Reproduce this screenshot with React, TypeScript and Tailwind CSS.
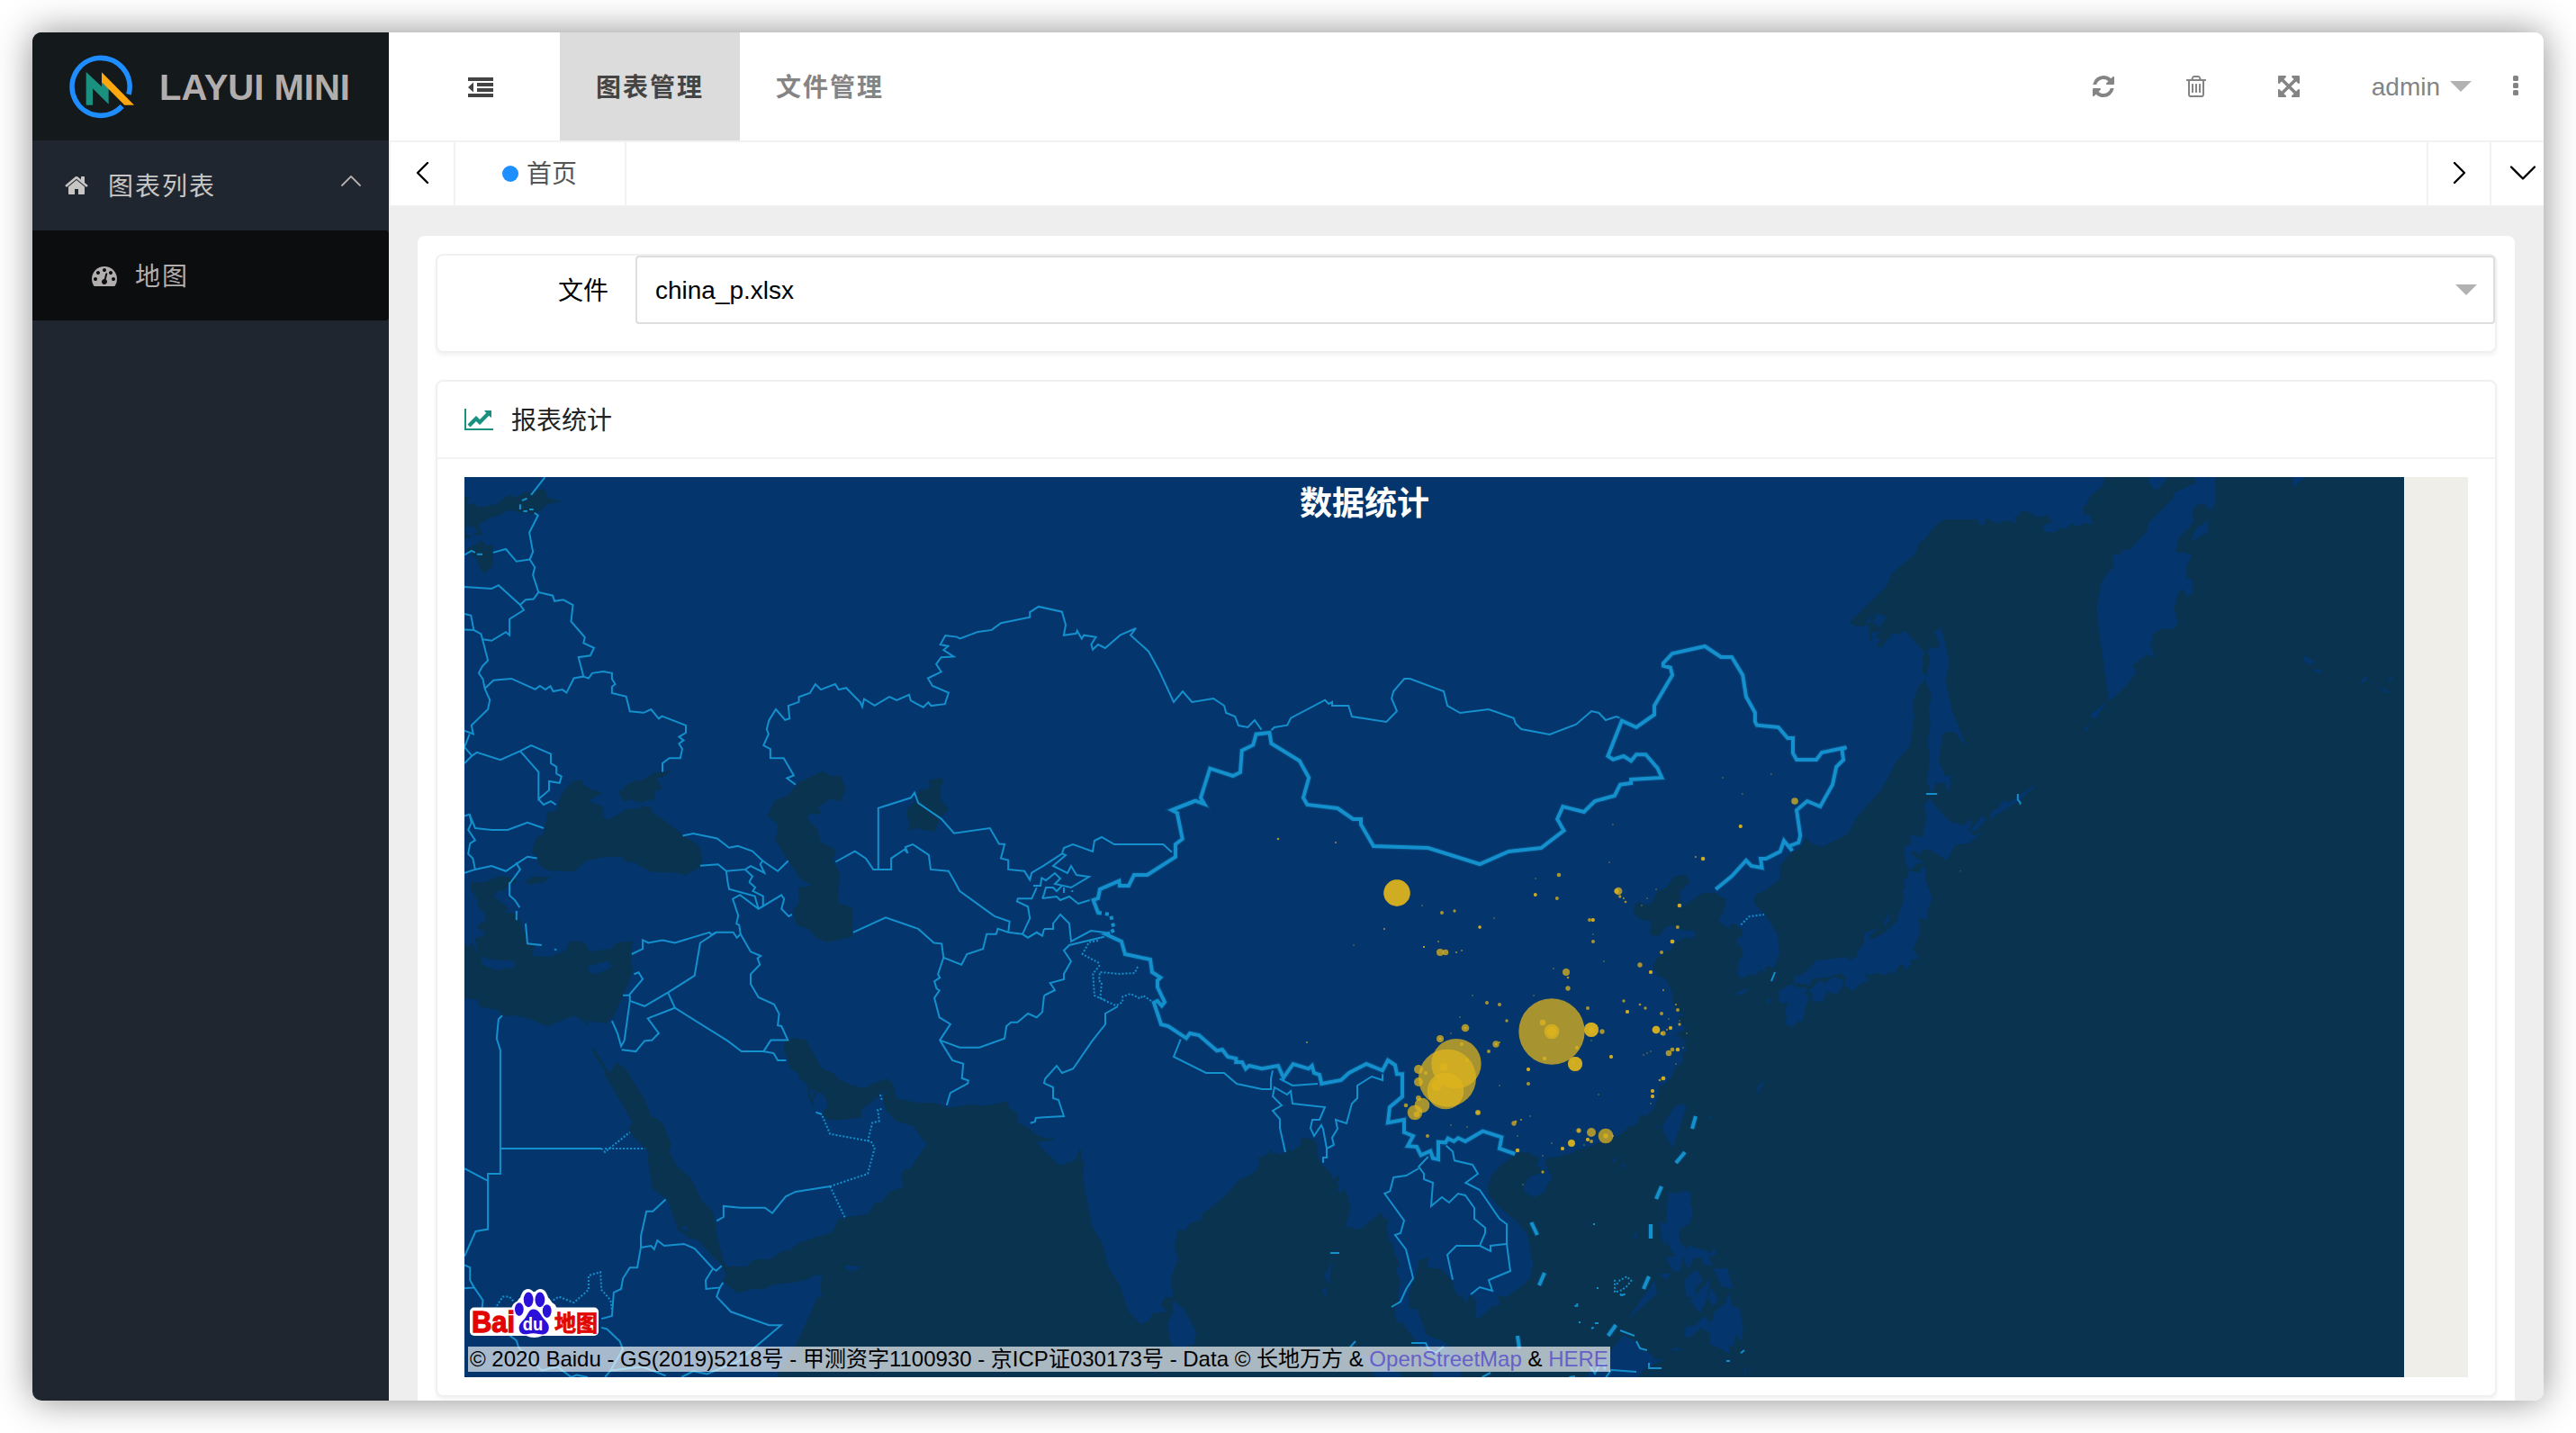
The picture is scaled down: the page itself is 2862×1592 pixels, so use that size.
import React from "react";

const SANS = "font-['Liberation_Sans','Noto_Sans_CJK_SC',sans-serif]";

/* ---------- map data ---------- */

// Each survey sheet has its own origin and scale; points are kept in sheet units.
type Sheet = [number, number, number, number];
const SHEETS: Record<string, Sheet> = {
  NW: [460, 390, 1.96, 2.61333],
  W: [510, 980, 1.96, 2.5621],
  AL: [1200, 520, 2.9037, 3],
  NE: [1640, 640, 2.9037, 3],
  TI: [1160, 900, 3, 3],
  SE: [1500, 1040, 3, 3],
  E: [2040, 500, 1.9075, 2.529],
  IN: [1160, 1180, 3, 3],
  JP: [1800, 900, 3, 3],
};

function project(src: string): string {
  let sheet: Sheet = SHEETS.NW;
  const out: string[] = [];
  for (const tok of src.trim().split(/\s+/)) {
    if (SHEETS[tok]) {
      sheet = SHEETS[tok];
      continue;
    }
    const [x, y] = tok.split(",").map(Number);
    out.push(`${(sheet[0] + x / sheet[2]).toFixed(1)},${(sheet[1] + y / sheet[3]).toFixed(1)}`);
  }
  return out.join(" ");
}

const SEAS: string[] = [
  // Pacific
  `E 1210,60 568,60 568,76 565,100 538,130 529,155 523,160 525,180 538,184 544,210 528,205 512,215 500,206 484,224 475,216 464,230 442,230 438,210 459,204 445,180 432,190 396,169 389,182 378,188 383,207 362,196 343,206 318,192 314,210 305,210 299,195 233,195 212,208 190,248 174,264 168,292 118,346 106,384 28,484 44,497 69,491 71,535 76,536 75,514 95,508 84,525 94,533 85,553 97,554 118,514 108,556 120,514 135,517 146,507 189,571 181,588 185,595 182,622 190,632 189,644 175,664 162,712 166,750 161,760 163,772 156,834
   NE 1358,614 1308,712 1230,800 1198,860 1116,902 1078,890 1066,872 1040,912 1020,918 980,964
   JP 532,230 487,265 447,284 447,311 482,347 525,415 532,479 512,525 486,519 483,540 466,528 463,541 446,552 440,545 402,562 384,532 397,535 393,503 411,485 401,450 386,446 391,425 404,422 409,403 383,378 368,380 362,395 326,367 345,340 355,293 335,290 318,275 276,276 192,333 212,306 195,298 203,290 197,275 232,239 218,215 180,222 155,257 120,275 110,305 82,318 62,306 50,314 42,340 55,355 82,370 98,365 105,380 97,408 110,419 133,418 150,392 168,384 192,388 205,400 250,403 248,424 230,432 228,421 185,440 168,466 150,470 122,495 108,525 118,534 125,552 150,560 175,610 175,640 188,655 182,665 215,684 190,690 196,705 222,727 176,752 195,750 210,768 228,769 208,780 222,788 220,803 207,808 210,840 187,858 170,892 140,922 128,912 133,935 124,960
   SE 1020,560 1010,578 985,600 965,595 960,622 940,638 935,628 898,665 875,672 830,690 780,708 750,716 735,725 690,735 655,740 648,755 660,775 645,780 620,765 632,742 618,730 626,722 610,735 600,722 570,720 550,728 500,765 470,800 458,840 466,868 505,910 555,950 590,992 610,1095 600,1140 575,1165 520,1203 490,1198 503,1228 475,1234 430,1275 418,1273 420,1215 400,1195 385,1225 378,1208 375,1192 365,1205 345,1175 342,1148 300,1108 255,1105 262,1070 230,1080 222,1120 195,1190 195,1240 225,1245 255,1330 310,1350 370,1400 369,1490 E 1210,2640`,
  // Indian Ocean, Red Sea and Persian Gulf
  `W 690,1409 735,1315 780,1182 795,1180 787,1168 790,1118 770,1120 762,1130 735,1138 685,1146 660,1160 640,1157 608,1170 590,1155 573,1130 582,1124 572,1088 548,1060 522,1020 500,1012 484,995 478,995 455,905 421,872 411,790 413,770 370,710 373,690 380,688 316,545 318,535 293,490 290,465 325,540 330,541 343,513 362,530 405,620 418,668 430,672 445,690 462,745 458,770 475,810 504,840 530,910 545,925 555,945 562,1010 580,1093 625,1095 640,1075 680,1073 703,1050 720,1048 740,1027 814,996 826,960 840,954 892,944 905,913 922,910 938,880 967,868 963,830 972,815 980,818 1019,745 1005,725 990,695 952,680 930,650 922,615 932,590 877,648 876,670 830,677 800,675 790,660 802,640 800,615 788,598 778,600 770,625 775,650 760,610 758,575 740,557 738,543 724,535 707,475 709,450 730,444 755,448 790,530 818,545 825,560 860,580 885,587 905,570 935,560 945,575 952,617 1000,628 1035,628 1065,643 1115,632 1145,637 1195,624 1198,645 1215,655 1217,685 1240,700 1257,720 1280,730 1298,725 1290,735 1258,741
   IN 0,293 52,345 105,326 118,290 125,292 122,315 134,340 129,385 137,430 160,548 195,605 213,680 255,748 280,830 323,874 350,860 362,838 410,830 388,808 402,784 430,783 423,720 447,655 435,615 447,558 470,560 485,538 526,525 526,506 600,450 652,390 685,378 710,358 718,340 712,320 745,307 755,288 760,310 772,300 780,310 805,300 815,290 828,298 838,288 855,275 860,248 878,256 895,256 910,272 910,308 920,335 955,370 965,392 980,375 985,392 975,398 985,415 975,420 987,436 1002,420 1022,488 1003,555 1020,548 1045,557 1062,553 1080,533 1112,512 1115,497 1140,525 1148,520 1144,560 1150,598 1162,602 1168,640 1178,655 1186,680 1173,685 1178,712 1188,722 1180,770 1180,800 1168,825 1173,866 1192,867 1235,925 1275,985 1300,1050 1300,1070 -100,1070`,
  // Mediterranean and Aegean
  `W 28,0 100,0 90,20 75,40 95,60 110,75 100,84 128,92 135,120 145,150 148,180 165,172 160,210 200,213 232,195 240,170 258,167 275,175 285,197 330,190 345,172 378,168 375,220 378,255 357,325 335,385 322,402 290,398 280,392 280,408 270,394 250,380 192,411 160,392 125,380 92,382 90,366 45,355 40,335 10,330 10,175 20,185 28,170 40,210 35,160 60,148 38,128 60,105 55,88 35,60 45,60 26,20`,
  `NW 155,1540 185,1525 215,1528 225,1540 205,1550 195,1568 180,1560 175,1550`,
  `NW 245,1535 260,1525 298,1528 280,1545 268,1543 258,1550 243,1546`,
  `NW 128,1550 140,1568 122,1566`,
  // Black Sea, Azov
  `NW 290,1340 310,1335 320,1290 330,1270 345,1250 365,1245 370,1260 390,1275 412,1282 380,1307 412,1322 412,1350 422,1362 465,1328 492,1328 495,1320 515,1325 520,1340 555,1372 585,1405 620,1435 628,1470 625,1498 590,1522 575,1515 515,1512 475,1482 465,1487 452,1468 410,1470 375,1480 348,1512 290,1508 270,1490 268,1472 257,1452 265,1415 283,1400`,
  `NW 442,1280 455,1275 460,1262 480,1248 500,1245 520,1225 562,1218 540,1238 528,1240 540,1270 525,1280 525,1300 490,1312 470,1302 455,1308 450,1290`,
  // Caspian, Aral
  `NW 770,1350 785,1305 815,1290 835,1255 890,1220 912,1235 928,1232 940,1270 930,1308 905,1300 880,1325 888,1343 858,1345 858,1360 880,1390 885,1425 918,1448 912,1480 927,1515 925,1568 W 825,60 835,62 857,75 857,155 803,171 780,160 762,133 735,122 727,80 740,60 738,15 NW 865,1552 840,1530 815,1480 787,1420 792,1375`,
  `NW 1075,1355 1073,1330 1090,1310 1100,1275 1125,1268 1120,1245 1145,1240 1155,1245 1145,1270 1150,1310 1165,1330 1145,1355 1135,1395 1110,1390 1095,1385 1075,1392 1080,1370`,
  // Baltic
  `NW 110,420 120,425 115,445 135,442 135,455 180,445 205,418 220,425 245,410 265,405 285,400 290,425 322,437 290,445 265,475 240,470 205,462 190,475 165,485 140,505 150,535 130,535 110,545`,
  `NW 148,548 155,565 172,562 172,625 155,645 145,635 135,600 112,575 130,565`,
];

const LANDS: string[] = [
  `NW 110,512 128,508 138,525 122,540 112,525`,
  `E 757,70 803,70 803,148 795,170 780,152 768,152 757,165 755,185 758,200 745,222 727,245 720,283 728,292 735,285 754,297 742,325 742,360 753,362 757,400 745,413 735,390 725,400 716,445 724,485 715,503 687,503 672,518 667,545 675,587 660,573 628,606 636,625 615,662 578,708 551,447 563,368 588,325 586,292 600,294 607,281 622,280 659,228 662,205 715,135 715,120 763,92`,
  `E 661,88 668,70 706,70 688,104 675,114`,
  `E 788,198 788,230 752,258 762,222`,
  `E 969,70 995,76 969,103`,
  `E 576,703 550,755 540,752 541,738 552,730`,
  `E 538,766 530,793 524,785`,
  `E 993,578 1016,596 1003,604 990,592`,
  `E 1008,616 1030,616 1024,630`,
  `E 1122,633 1127,645 1108,660`,
  `E 1170,640 1185,640 1170,652`,
  `E 1147,660 1178,682 1165,682`,
  `E 62,485 80,458 70,485`,
  `E 86,458 106,468 92,502 86,486 76,490`,
  `E 222,495 238,582 238,612 232,644 245,728 278,838 252,792 232,792 226,800 217,874 232,918 242,910 242,940 237,962 232,935 216,937 212,932 204,966 201,966 193,932 199,858 193,820 200,774 196,722 203,692 189,648 199,590 194,563 208,552 214,560 219,545 208,510 217,505`,
  `E 198,978 215,1008 240,1042 268,1055 290,1036 281,1068 291,1083 312,1073 280,1105 253,1109 234,1152 195,1120 182,1125 176,1136 165,1126 157,1132 186,1161 168,1162 162,1177 151,1176 143,1117 160,1104 156,1080 183,1088 192,1025 186,998`,
  `E 428,937 388,985 325,1037 330,1015 343,1008 355,982 365,992 382,975 412,948`,
  `E 320,1037 295,1070 284,1070 308,1028`,
  `JP 1017,190 1017,230 1041,294 1023,340 1023,364 997,362 999,412 977,462 995,494 968,500 970,517 947,532 949,514 926,520 914,552 903,525 905,538 883,550 855,542 827,552 820,538 818,552 832,567 800,580 775,603 748,583 746,570 754,560 738,544 700,555 640,562 632,586 617,578 579,578 580,547 595,555 628,531 652,502 757,489 765,500 788,490 790,472 813,443 813,411 862,393 830,420 835,432 880,410 922,370 948,290 940,272 950,262 945,232 958,225 963,200 990,208 1000,210 1005,190`,
  `JP 897,345 897,368 880,392 880,372`,
  `JP 665,567 682,577 714,555 742,568 740,590 720,616 692,604 675,639 640,637 640,607 620,612`,
  `JP 570,580 592,592 618,592 622,603 612,610 633,624 620,648 608,705 595,703 570,724 548,710 556,690 549,665 562,640 535,645 525,625 535,620 525,605`,
  `JP 530,533 515,578 520,550`,
  `JP 375,614 405,600 433,592 410,615`,
  `JP 489,625 508,635 490,647`,
  `JP 488,898 450,955 460,918`,
  `SE 1105,558 1122,568 1075,707 1043,650 1045,625 1080,570`,
  `SE 1060,852 1085,858 1120,848 1137,855 1134,890 1143,920 1130,960 1100,975 1095,1000 1100,1020 1125,1045 1130,1028 1155,1040 1180,1045 1205,1060 1210,1035 1222,1060 1195,1070 1208,1100 1180,1095 1170,1070 1145,1072 1130,1110 1115,1090 1110,1065 1100,1120 1075,1115 1052,1070 1085,1066 1065,1040 1056,1010 1050,1035 1040,1010 1030,950 1053,960`,
  `SE 1210,1107 1257,1107 1277,1175 1240,1170`,
  `SE 1155,1110 1178,1150 1155,1165 1150,1200 1120,1205 1115,1150 1130,1130`,
  `SE 1204,1142 1190,1200 1168,1258 1132,1215`,
  `SE 1205,1170 1227,1212 1210,1235 1195,1205 1172,1245`,
  `SE 1025,1125 1070,1125 1055,1145`,
  `SE 1262,1187 1275,1235 1300,1240 1310,1310 1305,1350 1285,1330 1280,1362 1262,1370 1265,1395 1235,1375 1200,1360 1200,1325 1170,1305 1130,1340 1112,1330 1120,1300 1150,1298 1180,1265 1205,1290 1215,1250 1250,1225`,
  `SE 1015,1150 1023,1192 922,1280`,
  `SE 910,1330 945,1345 970,1375 1010,1398 1010,1410 1050,1408 985,1440 950,1480 780,1480 810,1430 870,1380`,
  `SE 1065,1380 1090,1370 1110,1382`,
  `SE 1315,1437 1325,1437 1313,1470`,
  `SE 600,800 640,790 658,775 675,808 658,825 645,855 615,870 582,855 577,830`,
  `SE 870,745 880,738 887,746 878,752`,
  `SE 898,768 918,756 916,772`,
  `SE 1190,593 1208,606 1194,610`,
  `SE 1015,636 1022,630 1035,640`,
  `SE 942,1006 950,985 960,1006`,
  `SE 30,1395 80,1400 130,1430 170,1460 180,1480 90,1480 50,1420`,
  `IN 430,792 465,822 507,900 500,940 465,950 425,945 411,875 430,830`,
  `IN 962,648 955,700 951,740 932,712 948,690`,
  `IN 940,750 926,762 940,787`,
  `IN 1390,1000 1300,1000 1280,960 1390,1060`,
  `W 280,238 325,225 333,238 325,248 295,263 284,255`,
  `W 48,208 60,218 85,222 122,225 122,242 80,250 50,235`,
  `W 843,1090 880,1095 855,1109 840,1100`,
  `W 763,590 775,592 768,622`,
  `W 484,990 490,975 502,992`,
];

const BORDERS: string[] = [
  `NW 285,366 255,418`,
  `NW 262,470 270,477 251,527 259,583 252,605 263,628 259,650 271,700 302,710 306,726 325,722 346,737 342,785 372,831 369,848 392,862 384,884 358,889 369,945 348,950 332,992 323,983 303,988 297,973 286,983 274,972 264,982 212,951 173,956 154,980`,
  `NW 172,585 200,575 223,611 252,605`,
  `NW 110,592 125,580 133,585`,
  `NW 137,590 149,590`,
  `NW 246,428 235,434`,
  `NW 231,445 231,460`,
  `NW 238,465 247,465`,
  `NW 251,460 260,460`,
  `NW 110,685 169,690 184,680 231,737 239,752 208,778 208,825 200,816 169,841 149,837`,
  `NW 231,737 243,722 260,720 271,700`,
  `NW 110,763 124,768 130,810 110,809`,
  `NW 130,810 146,822 161,898 149,915 141,935 150,952 154,980 165,1013 161,1040 125,1087 129,1112 110,1102`,
  `NW 369,945 380,950 388,935 412,930 431,935 431,952 438,967 431,975 431,993 462,1003 470,1046 500,1050 516,1040 533,1067 540,1060 592,1087 592,1108 577,1120 587,1130 577,1140 584,1155 580,1182 556,1182 541,1197 541,1222`,
  `NW 121,1112 110,1150 126,1175 110,1197`,
  `NW 126,1175 137,1165 188,1187 231,1161 255,1145 298,1170 298,1197 310,1207 310,1227 321,1235 317,1254 294,1249 294,1275 271,1301 271,1222 231,1161`,
  `NW 271,1301 282,1317 298,1307 309,1317`,
  `NW 110,1350 121,1345 133,1385 169,1390 204,1390 247,1369 282,1385`,
  `NW 121,1345 125,1370 118,1390 133,1420 122,1430 118,1460 128,1473 133,1505`,
  `NW 110,1515 133,1505 169,1495 200,1510 222,1490 247,1468 268,1473`,
  `NW 222,1485 231,1505 208,1547 208,1568`,
  `NW 585,1407 608,1401 660,1415 686,1442 705,1437 737,1452 759,1480 792,1510 815,1480`,
  `NW 623,1494 662,1490 680,1510 721,1505 733,1495 763,1515 754,1490 759,1480`,
  `NW 680,1510 683,1542`,
  `NW 721,1505 737,1525 730,1542`,
  `NW 831,1259 812,1240 827,1232 805,1182 776,1182 776,1155 761,1145 772,1112 768,1098 773,1072 788,1040 808,1071 818,1067 815,1030 838,1019 838,1004 862,993 874,967 886,983 917,967 925,983 941,978 972,1020 976,1033 980,1010 1003,1029 1035,1004 1051,1014 1078,998 1082,1015 1109,1034 1120,1020 1126,1030 1156,1025 1164,992 1129,972 1119,950 1148,931 1137,909 1148,889 1175,887 1153,868 1163,857 1146,852 1157,826 1182,830 1189,835 1228,815 1258,810 1278,790 1341,773 1341,758 1360,742 1411,757 1419,795 1415,825 1442,820 1444,812 1454,835 AL 12,557 51,563 36,588 41,605 58,588 81,600 129,557 180,534 163,557 221,611 255,675 302,780 331,744 361,780 430,768 465,792 471,816 500,828 511,858 541,864 563,840 585,872`,
  `AL 617,874 627,864 668,857 680,833 790,773 802,786 813,780 813,792 866,792 877,828 988,846 1022,810 1005,768 1011,744 1046,702 1064,702 1173,744 1185,792 1226,816 1318,804 1399,833 1405,852 1423,870 1515,888 NE 323,494 372,450 396,456 418,480 452,468 463,473`,
  `NW 1011,1505 1011,1327 1082,1297 1090,1282 1098,1312 1148,1358 1176,1400 1254,1385 1274,1431 1286,1432 1278,1473 1294,1478 1294,1505 1329,1510 1341,1535 1345,1515 TI 0,184 60,145 66,126 96,114 162,138 168,102 192,90 234,114 397,114 426,140`,
  `NW 918,1483 960,1452 984,1473 1000,1505 1039,1505 1039,1473 1068,1447 1075,1458 1070,1440 1086,1432 1121,1463 1125,1505 1164,1510 1178,1542 W 1090,25 1166,97 1199,112 1196,143`,
  `TI 60,145 72,150 30,186 78,210 90,186 108,216 150,222 90,258 36,246 54,228 36,210 6,234 -8,226 -12,252 -36,252`,
  `TI -6,294 0,280 6,258 30,258 42,270 60,252`,
  `TI 66,258 66,276`,
  `TI 91,270 97,270`,
  `TI -6,294 42,288 54,300 84,288 114,312 152,300`,
  `TI 0,396 30,396 30,378 54,348 84,378 90,438 156,402 206,408`,
  `TI 200,422 84,450 66,468 90,504 66,546 66,564 20,576 36,600 0,618`,
  `TI 246,654 204,678 204,714 160,770 97,862 60,876 42,852 4,895 0,910 30,924 30,960 48,966 66,1020 0,1024 W 1256,671 1254,682 1244,686`,
  `TI 455,764 432,822 540,876 600,876 642,912 726,930 756,930 756,895 762,868`,
  `TI 785,895 828,918 912,912`,
  `TI 804,1140 786,1060 786,1030 762,1002 792,984 762,954 768,924 810,948 822,936 828,978 936,990 918,1032 894,1032 888,1060 900,1086 924,1050 930,1062 942,1128 942,1158 930,1158 930,1175`,
  `TI 942,1128 966,1116 960,1092 978,1062 972,1032 1008,1044 1026,978 1044,960 1044,918 1092,888 1128,900 1128,880`,
  `SE 260,735 229,768 246,792 246,810 276,822 270,900 306,870 330,888 360,858 384,864 414,906 414,942 450,972 450,990 432,1032 468,1050 468,1032 520,1026`,
  `SE 229,774 187,798 145,804 133,850 115,858 180,948 168,990 150,996 186,1044 210,1140 187,1176 168,1218 138,1236`,
  `SE 320,698 342,718 348,748 408,762 426,792 385,822 432,846 498,942 522,960 522,1026 534,1116 462,1146 474,1182 432,1170 402,1194`,
  `SE 432,1032 354,1032 324,1062 342,1145`,
  `SE 204,1356 252,1356 262,1378 285,1388 312,1368`,
  `SE 900,1314 948,1332`,
  `SE 954,1350 966,1374 990,1380`,
  `SE 996,1422 996,1440 1038,1440`,
  `SE 1302,1390 1314,1380`,
  `SE 1254,1416 1266,1416`,
  `SE 1416,120 1404,150`,
  `SE 853,1470 870,1446 954,1452`,
  `SE 800,1435 816,1458 830,1430 848,1428 848,1445`,
  `SE 440,1470 468,1455`,
  `SE 730,1470 750,1467`,
  `SE 0,1370 18,1350`,
  `SE 748,1232 757,1232 757,1224`,
  `SE 810,960 816,960`,
  `SE 822,1173 828,1173`,
  `SE 816,1290 828,1290`,
  `SE 804,1307 812,1304`,
  `SE 762,1287 768,1287`,
  `SE 900,1192 904,1197 917,1193`,
  `IN 954,636 984,636`,
  `E 191,966 214,966`,
  `E 385,966 385,982 390,990 390,996`,
  `W 110,0 110,38 122,52 132,72`,
  `W 125,82 125,108`,
  `W 145,118 149,175 180,179`,
  `W 208,190 212,194`,
  `W 376,205 400,190 400,165 412,173 443,165 470,173 545,143 550,150`,
  `W 560,143 525,173 513,266 455,314 404,353 372,338`,
  `W 550,150 560,143 597,143 605,158 613,148 635,198 657,210 650,217 655,235 635,262 635,290 652,328 686,348 697,375 694,408 702,410 716,450 679,450 663,482 685,487 694,507 712,507`,
  `W 663,482 615,482 585,452 470,358 411,388 435,430 420,450 404,452 385,482 354,477`,
  `W 470,358 455,314`,
  `W 381,262 391,257 400,276 370,322 357,322`,
  `W 372,322 372,338 360,450 353,467 345,430 333,395`,
  `W 613,148 610,122 604,118 608,95 596,48 612,36 652,76 702,37 708,48 702,76 718,97 725,92`,
  `W 585,0 588,20 644,40 652,76`,
  `W 632,0 645,15 640,25 662,40 662,70`,
  `W 858,143 929,101 1000,133 1034,173 1051,175 1055,215 1043,262 1047,272 1035,282 1040,303 1046,308 1035,330 1046,385 1070,404 1047,450 1074,507 1098,517 1095,558 1109,565 1108,573 1070,600 1062,635`,
  `W 1047,450 1090,471 1133,471 1188,445 1192,410 1202,399 1216,399 1239,374 1258,385 1270,370 1274,323`,
  `W 1055,215 1094,235 1106,205 1141,190 1149,148 1170,148 1173,133 1196,143 1227,148 1239,158 1258,143 1270,153 1274,133`,
  `W 1227,148 1243,103 1239,70 1215,55 1217,47 1247,47 1258,16`,
  `W 94,380 86,390 82,445 90,478 90,830 63,830 63,988 36,994 12,1065`,
  `W 12,815 63,850`,
  `W 90,758 310,758`,
  `W 450,903 422,937 408,937 396,1008 396,1040 388,1097 372,1097 357,1128 353,1158 337,1168 333,1235 310,1243`,
  `W 396,1040 418,1035 425,1045 432,1020 447,1035 490,1030 513,1043 553,1100 560,1106 572,1092`,
  `W 553,1100 537,1133 538,1158 568,1154 575,1140`,
  `W 568,1154 561,1180 592,1223 675,1261 701,1261 607,1365 540,1400 510,1392 485,1409`,
  `W 310,1268 322,1272 350,1307 357,1330 330,1390 318,1409`,
  `W 12,1090 24,1097 24,1133 33,1154 12,1156`,
  `W 33,1154 52,1190 50,1215`,
  `W 110,1290 125,1305 130,1325 180,1390 215,1380 244,1409 256,1403 280,1409`,
  `W 330,1390 400,1380 450,1405`,
  `W 561,964 576,953 576,922 613,927 666,927 682,942 711,895 733,881 808,866`,
  `W 777,655 790,661`,
];

const DOTTED: string[] = [
  `TI 180,435 150,440 128,480 180,508 184,520 163,545 168,618 240,652 262,640 262,622 288,612 320,628 330,618 366,642`,
  `TI 312,522 302,543 252,546 186,540 183,568 192,575 187,625 200,632`,
  `JP 403,382 430,355 480,348`,
  `W 310,758 318,768 372,712`,
  `W 318,758 405,758`,
  `W 808,866 840,954`,
  `W 808,866 890,830 905,757 897,738 808,717 790,662`,
  `W 890,738 900,685 915,680 912,648 922,645`,
  `W 917,605 922,625`,
  `W 78,1215 95,1180 110,1180 120,1195`,
  `W 205,1190 218,1180 250,1197 282,1160 282,1120 308,1110 310,1160 330,1190 333,1220`,
  `SE 882,1145 882,1187 905,1180 925,1165 937,1148 922,1135 898,1148 886,1165`,
];

const FRONTIER: string[] = [
  `AL 372,1109 296,1140 314,1150 TI 444,12 461,96 438,114 438,156 344,216 300,216 282,252 252,252 250,236 186,264 180,294 164,300 180,342 188,343`,
  `TI 220,410 206,414 258,438 270,480 354,498 360,540 388,558 378,568 378,590 402,640 392,652 378,636 366,642 390,714 414,720 474,760 486,744 516,750 576,802 594,798 612,822 640,828 640,840 660,840 672,862 684,852 726,862 780,852 798,892 830,846 882,862 893,852 900,876 918,882 925,912 990,900 1016,876 1074,846 1128,868 1146,834 1170,850 1176,880 1194,880 1194,955 1152,990 1146,1042 1200,1032 1200,1074 1230,1086 1212,1120 1242,1122 1256,1150 1288,1136 1296,1160 1314,1164 1314,1106 1338,1108 1346,1094 1366,1104 1380,1093 1404,1104 1462,1070 SE 505,670 498,708 550,726`,
  `AL 296,1140 372,1109 401,1120 389,1099 419,1001 493,1026 517,1014 522,941 558,923 568,887 611,882 617,918 708,976 738,1032 720,1099 733,1122 831,1134 TI 1030,30 1056,30 1056,48 1098,120 1280,126 1452,180 NE 105,918 210,906 283,848 262,810 280,768 348,786 383,750 447,732 465,695 500,690 500,678 599,672 585,640 547,595 517,595 500,616 476,600 442,611 425,600 470,482 517,504 575,462 575,432 633,330 627,305 604,299 604,290 633,258 738,234 790,270 825,270 860,330 871,402 900,455 900,485 906,497 975,504 1005,540 1022,540 1022,590 1034,612 1098,612 1115,588 1195,571 1180,578 1185,612 1162,636 1150,695 1110,768 1068,750 1034,780 1046,865 1040,888 1010,900 1020,916 993,882 981,918 935,942 918,942 922,972 888,966 871,948 825,1000 773,1044`,
  `SE 604,954 624,996`,
  `SE 1152,600 1140,642`,
  `SE 1116,720 1086,756`,
  `SE 1038,834 1020,876`,
  `SE 1002,960 1002,1008`,
  `SE 648,1122 630,1164`,
  `SE 996,1134 978,1176`,
  `SE 886,1296 860,1332`,
  `SE 558,1332 564,1374`,
];

// x,y,r triples in sheet units.
const BUBBLES: string[] = [
  `SE 672,318,110 672,318,25 672,318,16 642,288,10 756,372,6 648,408,7 804,312,24 804,312,24 804,312,10 750,426,24 750,426,24 744,420,5 354,425,83 324,473,96 318,516,61 312,437,14 288,498,18 390,414,6 372,360,6 252,456,6 240,564,25 216,588,25 222,594,10 228,444,15 228,486,15 228,540,9 186,564,7 384,306,13 384,306,4 300,342,12 300,342,4 486,360,11 486,360,4 462,384,6 498,354,3 522,282,5 456,222,6 498,228,6 300,54,12 318,54,10 246,36,3 354,54,3 720,120,12 726,138,4 726,174,8 792,240,6 840,318,8 870,402,6 870,402,6 594,444,6 594,444,6 594,492,6 426,588,9 426,588,6 258,666,6 546,624,8 552,618,4 570,612,3 762,648,8 762,648,5 804,654,15 852,666,25 852,666,8 876,666,3 738,690,12 738,690,11 792,678,6 792,678,6 804,684,6 708,708,6 708,708,6 558,714,7 558,714,6 642,786,5 810,18,6 966,96,8 1002,120,6 1002,120,6 1074,18,7 1074,18,7 1038,54,6 912,216,5 924,252,6 924,252,6 966,228,4 984,240,5 1038,258,6 1092,246,6 1086,228,3 1020,312,13 1020,312,13 1044,324,8 1038,324,5 1068,306,6 1068,306,6 1056,312,3 1098,294,5 1074,378,7 1062,390,10 1092,378,7 1092,378,6 1044,474,7 1044,474,7 1032,480,4 1008,516,6 1008,516,6 1008,534,6 1008,534,6 1044,180,3`,
  `NE 1028,750,11.5 853,834,6 853,834,6 732,942,7 732,942,6 708,936,3 267,996,7 191,1062,6 191,1062,5 261,1074,6 459,1050,13 453,1050,8 464,1068,5 482,1086,4 476,1074,3 656,1098,7 656,1098,6 650,1170,6 366,1146,6 377,1146,6 377,1146,6 12,1170,5`,
  `TI 1176,276,44 1176,276,44 1326,342,6 1368,336,5 1452,390,5 1266,456,3 1134,396,3 780,96,4 972,108,3 876,774,3`,
];
const FAINT: string[] = [
  `SE 372,48,3 408,198,3 366,270,3 336,324,3 498,498,3 336,630,3 390,636,3 294,18,3 846,84,3 612,198,3 678,108,3 978,396,3 990,390,3 1002,384,3 804,348,3 1002,558,3 558,666,3 672,690,3 642,732,3 576,828,3 828,528,3 1122,324,3 600,600,3 780,696,3 1098,282,3 1062,276,3 1110,372,3 1086,426,3`,
  `NE 192,1008,3 430,954,3 952,660,3 859,726,3 441,828,3 552,1074,3 581,1044,3 796,672,3 534,1098,3 377,1194,3 58,1140,3`,
  `TI 1260,318,3 1032,450,3 1314,438,3 1392,468,3`,
  `E 263,1183,2`,
];

function bubbles(list: string[]) {
  return list.flatMap((src) => {
    const [name, ...rest] = src.trim().split(/\s+/);
    const s = SHEETS[name];
    return rest.map((t) => {
      const [x, y, r] = t.split(",").map(Number);
      return { x: s[0] + x / s[2], y: s[1] + y / s[3], r: r / s[3] };
    });
  });
}

function WorldMap() {
  return (
    <svg className="block h-[1000px] w-[2155px] shrink-0" viewBox="516 530 2155 1000">
      <rect x="516" y="530" width="2155" height="1000" fill="#04366d" />
      <g fill="#09334f">
        {SEAS.map((s, i) => <polygon key={i} points={project(s)} />)}
      </g>
      <g fill="#04366d">
        {LANDS.map((s, i) => <polygon key={i} points={project(s)} />)}
      </g>
      <g fill="none" stroke="#1490cd" strokeWidth="2">
        {BORDERS.map((s, i) => <polyline key={i} points={project(s)} />)}
      </g>
      <g fill="none" stroke="#1490cd" strokeWidth="2" strokeDasharray="2 2">
        {DOTTED.map((s, i) => <polyline key={i} points={project(s)} />)}
      </g>
      <g fill="none" stroke="#1490cd" strokeWidth="6.5" opacity="0.18">
        {FRONTIER.map((s, i) => <polyline key={i} points={project(s)} />)}
      </g>
      <g fill="none" stroke="#1490cd" strokeWidth="4">
        {FRONTIER.map((s, i) => <polyline key={i} points={project(s)} />)}
        <polyline points={project("TI 180,342 222,348 234,400 206,414")} strokeDasharray="4 4" />
      </g>
      <g fill="#ddb41e" fillOpacity="0.75">
        {bubbles(BUBBLES).map((b, i) => <circle key={i} cx={b.x} cy={b.y} r={b.r} />)}
      </g>
      <g fill="#ddb41e" fillOpacity="0.35">
        {bubbles(FAINT).map((b, i) => <circle key={i} cx={b.x} cy={b.y} r={b.r} />)}
      </g>
    </svg>
  );
}

/* ---------- icons ---------- */

function Glyph({ d, className = "", wide = false }: { d: string; className?: string; wide?: boolean }) {
  return (
    <svg className={`block h-7 shrink-0 ${wide ? "w-8" : "w-7"} ${className}`} viewBox={wide ? "0 0 2048 1792" : "0 0 1792 1792"} fill="currentColor">
      <path d={d} />
    </svg>
  );
}

const REFRESH =
  "M1639 1056q0 5-1 7-64 268-268 434.5t-478 166.5q-146 0-282.5-55t-243.5-157l-129 129q-19 19-45 19t-45-19-19-45v-448q0-26 19-45t45-19h448q26 0 45 19t19 45-19 45l-137 137q71 66 161 102t187 36q134 0 250-65t186-179q11-17 53-117 8-23 30-23h192q13 0 22.5 9.5t9.5 22.5zm25-800v448q0 26-19 45t-45 19h-448q-26 0-45-19t-19-45 19-45l138-138q-148-137-349-137-134 0-250 65t-186 179q-11 17-53 117-8 23-30 23h-199q-13 0-22.5-9.5t-9.5-22.5v-7q65-268 270-434.5t480-166.5q146 0 284 55.5t245 156.5l130-129q19-19 45-19t45 19 19 45z";
const TRASH =
  "M704 736v576q0 14-9 23t-23 9h-64q-14 0-23-9t-9-23v-576q0-14 9-23t23-9h64q14 0 23 9t9 23zm256 0v576q0 14-9 23t-23 9h-64q-14 0-23-9t-9-23v-576q0-14 9-23t23-9h64q14 0 23 9t9 23zm256 0v576q0 14-9 23t-23 9h-64q-14 0-23-9t-9-23v-576q0-14 9-23t23-9h64q14 0 23 9t9 23zm128 724v-948h-896v948q0 22 7 40.5t14.5 27 10.5 8.5h832q3 0 10.5-8.5t14.5-27 7-40.5zm-672-1076h448l-48-117q-7-9-17-11h-317q-10 2-17 11zm928 32v64q0 14-9 23t-23 9h-96v948q0 83-47 143.5t-113 60.5h-832q-66 0-113-58.5t-47-141.5v-952h-96q-14 0-23-9t-9-23v-64q0-14 9-23t23-9h309l70-167q15-37 54-63t79-26h320q40 0 79 26t54 63l70 167h309q14 0 23 9t9 23z";
const EXPAND =
  "M1411 541l-355 355 355 355 144-144q29-31 70-14 39 17 39 59v448q0 26-19 45t-45 19h-448q-42 0-59-40-17-39 14-69l144-144-355-355-355 355 144 144q31 30 14 69-17 40-59 40h-448q-26 0-45-19t-19-45v-448q0-42 40-59 39-17 69 14l144 144 355-355-355-355-144 144q-19 19-45 19-12 0-24-5-40-17-40-59v-448q0-26 19-45t45-19h448q42 0 59 40 17 39-14 69l-144 144 355 355 355-355-144-144q-31-30-14-69 17-40 59-40h448q26 0 45 19t19 45v448q0 42-39 59-13 5-25 5-26 0-45-19z";
const HOME =
  "M1472 992v480q0 26-19 45t-45 19h-384v-384h-256v384h-384q-26 0-45-19t-19-45v-480q0-1 .5-3t.5-3l575-474 575 474q1 2 1 6zm223-69l-62 74q-8 9-21 11h-3q-13 0-21-7l-692-577-692 577q-12 8-24 7-13-2-21-11l-62-74q-8-10-7-23.5t11-21.5l719-599q32-26 76-26t76 26l244 204v-195q0-14 9-23t23-9h192q14 0 23 9t9 23v408l219 182q10 8 11 21.5t-7 23.5z";
const GAUGE =
  "M384 1152q0-53-37.5-90.5t-90.5-37.5-90.5 37.5-37.5 90.5 37.5 90.5 90.5 37.5 90.5-37.5 37.5-90.5zm192-448q0-53-37.5-90.5t-90.5-37.5-90.5 37.5-37.5 90.5 37.5 90.5 90.5 37.5 90.5-37.5 37.5-90.5zm428 481l101-382q6-26-7.5-48.5t-38.5-29.5-48 6.5-30 39.5l-101 382q-60 5-107 43.5t-63 98.5q-20 77 20 146t117 89 146-20 89-117q16-60-6-117t-72-91zm660-33q0-53-37.5-90.5t-90.5-37.5-90.5 37.5-37.5 90.5 37.5 90.5 90.5 37.5 90.5-37.5 37.5-90.5zm-640-640q0-53-37.5-90.5t-90.5-37.5-90.5 37.5-37.5 90.5 37.5 90.5 90.5 37.5 90.5-37.5 37.5-90.5zm448 192q0-53-37.5-90.5t-90.5-37.5-90.5 37.5-37.5 90.5 37.5 90.5 90.5 37.5 90.5-37.5 37.5-90.5zm320 448q0 261-141 483-19 29-54 29h-1402q-35 0-54-29-141-221-141-483 0-182 71-348t191-286 286-191 348-71 348 71 286 191 191 286 71 348z";
const LINE_CHART =
  "M2048 1536v128h-2048v-1536h128v1408h1920zm-128-1248v435q0 21-19.5 29.5t-35.5-7.5l-121-121-633 633q-10 10-23 10t-23-10l-233-233-416 416-192-192 585-585q10-10 23-10t23 10l233 233 464-464-121-121q-16-16-7.5-35.5t29.5-19.5h435q14 0 23 9t9 23z";

function Logo() {
  return (
    <svg className="block h-[76px] w-[76px] shrink-0" viewBox="75 40 228 228">
      <path d="M281 172 A96 96 0 1 0 259 212" transform="translate(1 -1)" fill="none" stroke="#1e8dff" strokeWidth="17" />
      <path d="M140 97L192 146V131L215 151V204L162 152V207H140Z" fill="#1a9180" />
      <path d="M192 98L300 207H268L192 131Z" fill="#ffa70f" />
    </svg>
  );
}

function Chevron({ points, className }: { points: string; className: string }) {
  return (
    <svg className={`block h-7 w-7 shrink-0 ${className}`} viewBox="0 0 28 28" fill="none" stroke="currentColor" strokeLinecap="round" strokeLinejoin="round">
      <polyline points={points} />
    </svg>
  );
}

function Caret() {
  return (
    <svg className="block h-3 w-6 shrink-0 text-[#b2b2b2]" viewBox="0 0 24 12" fill="currentColor">
      <path d="M0 0H24L12 12Z" />
    </svg>
  );
}

function BaiduMark() {
  return (
    <svg className="block h-[55px] w-[147px]" viewBox="0 0 150 56">
      <g fill="#fff">
        <rect x="1" y="22" width="146" height="32" rx="5" />
        <ellipse cx="74" cy="30" rx="24" ry="26" />
        <ellipse cx="67" cy="14" rx="9" ry="13" />
        <ellipse cx="81" cy="14" rx="9" ry="13" />
        <ellipse cx="56" cy="25" rx="8" ry="10" />
        <ellipse cx="92" cy="26" rx="8" ry="10" />
      </g>
      <g fill="#2a10d8">
        <ellipse cx="67.500" cy="13" rx="5.500" ry="8.500" />
        <ellipse cx="80.500" cy="13" rx="5.500" ry="8.500" />
        <ellipse cx="57" cy="24" rx="5" ry="7.500" />
        <ellipse cx="88.500" cy="26" rx="5" ry="7.500" />
        <path d="M73 24c6 0 8 6 12 11 4 4 7 8 5 13-2 5-7 5-11 4-4-1-8-1-12 0-5 1-9 0-10-5-1-5 2-8 6-12 4-5 5-11 10-11z" />
      </g>
      <g fontFamily="Liberation Sans, Noto Sans CJK SC, sans-serif" fontWeight="700">
        <text x="3" y="50" fontSize="34" fill="#e10601" textLength="49" lengthAdjust="spacingAndGlyphs" stroke="#e10601" strokeWidth="1.4">Bai</text>
        <text x="61" y="48" fontSize="21" fill="#fff" textLength="23" lengthAdjust="spacingAndGlyphs">du</text>
        <text x="97" y="49" fontSize="25" fill="#e10601" textLength="49" lengthAdjust="spacingAndGlyphs" stroke="#e10601" strokeWidth="0.8">地图</text>
      </g>
    </svg>
  );
}

/* ---------- layout ---------- */

function Sidebar() {
  return (
    <aside className="flex w-[396px] shrink-0 flex-col bg-[#1f262f]">
      <div className="flex h-[120px] items-center bg-[#14191c] pt-[5px] pl-[38px]">
        <Logo />
        <span className="mb-[3px] ml-[27px] text-[40px] leading-none font-bold whitespace-nowrap text-[#b3aeae]">LAYUI MINI</span>
      </div>
      <div className="flex h-[100px] items-center pl-[35px] text-[#c8c6c5]">
        <Glyph d={HOME} />
        <span className="mt-[3px] ml-[21px] text-[28px] leading-none tracking-[2px]">图表列表</span>
        <Chevron points="4,17 14,7 24,17" className="mr-[28px] mb-[6px] ml-auto stroke-[1.8] text-[#b3aeae]" />
      </div>
      <div className="flex h-[100px] items-center rounded-r bg-[#0c0d0f] pl-[66px] text-[#b3aeae]">
        <Glyph d={GAUGE} />
        <span className="mt-[3px] ml-[20px] text-[28px] leading-none tracking-[2px]">地图</span>
      </div>
    </aside>
  );
}

function TopBar() {
  return (
    <header className="flex h-[122px] shrink-0 items-stretch border-b-2 border-[#f2f2f2] bg-white text-[#848484]">
      <div className="flex w-[190px] items-center pt-[2px] pl-[88px]">
        <svg className="block h-[22px] w-7" viewBox="0 0 28 22" fill="#444">
          <path d="M0 0H28V4H0ZM10 6H28V10H10ZM10 12H28V16H10ZM0 18H28V22H0ZM0 11L6 5.500V16.500Z" />
        </svg>
      </div>
      <nav className="flex text-[28px] leading-none font-bold tracking-[2px]">
        <span className="flex w-[200px] items-center justify-center bg-[#dcdcdc] pt-[3px] text-[#444]">图表管理</span>
        <span className="flex w-[200px] items-center justify-center pt-[3px]">文件管理</span>
      </nav>
      <div className="ml-auto flex items-center">
        <Glyph d={REFRESH} className="mr-[75px]" />
        <Glyph d={TRASH} className="mr-[75px]" />
        <Glyph d={EXPAND} className="mr-[78px]" />
        <span className="mt-[2px] mr-[11px] text-[28px] leading-none">admin</span>
        <Caret />
        <svg className="mr-[28px] mb-[2px] ml-[46px] block h-[22px] w-[6px]" viewBox="0 0 6 22" fill="currentColor">
          <rect width="6" height="6" rx="1.500" />
          <rect y="8" width="6" height="6" rx="1.500" />
          <rect y="16" width="6" height="6" rx="1.500" />
        </svg>
      </div>
    </header>
  );
}

function TabBar() {
  return (
    <div className="flex h-[72px] shrink-0 border-b-2 border-[#f0f0f0] bg-white text-black">
      <div className="flex w-[74px] items-center justify-center border-x-2 border-[#f2f2f2] pb-[2px]">
        <Chevron points="20,3 9,14 20,25" className="stroke-[2.4]" />
      </div>
      <div className="flex w-[190px] items-center border-r-2 border-[#f2f2f2] pl-[52px]">
        <span className="h-[18px] w-[18px] rounded-full bg-[#1e8fff]" />
        <span className="mt-[1px] ml-[9px] text-[28px] leading-none text-[#555]">首页</span>
      </div>
      <div className="ml-auto flex">
        <div className="flex w-[70px] items-center justify-center border-l-2 border-[#f2f2f2] pb-[2px]">
          <Chevron points="9,3 20,14 9,25" className="stroke-[2.4]" />
        </div>
        <div className="flex w-[60px] items-center border-l-2 border-[#f2f2f2] pb-[2px] pl-[21px]">
          <Chevron points="1,7.500 14,20.500 27,7.500" className="stroke-[2.4]" />
        </div>
      </div>
    </div>
  );
}

function FilterCard() {
  return (
    <section className="h-[110px] rounded-lg border-2 border-[#f0f0f0] bg-white shadow-[0_3px_4px_rgba(0,0,0,0.05)]">
      <div className="flex h-[76px] items-stretch">
        <label className="flex w-[220px] items-center justify-end pt-[3px] pr-[30px] text-[28px] leading-none text-black">文件</label>
        <div className="flex flex-1 items-center justify-between rounded-[4px] border-2 border-[#dedede] bg-white pr-[18px] pl-5">
          <span className="mt-[2px] text-[28px] leading-none text-black">china_p.xlsx</span>
          <Caret />
        </div>
      </div>
    </section>
  );
}

function ReportCard() {
  return (
    <section className="mt-[30px] h-[1130px] shrink-0 rounded-lg border-2 border-[#f0f0f0] bg-white shadow-[0_3px_4px_rgba(0,0,0,0.05)]">
      <div className="flex h-[86px] items-center border-b-2 border-[#f3f3f3] pl-[30px]">
        <Glyph d={LINE_CHART} wide className="text-[#1a9180]" />
        <span className="mt-[3px] ml-[20px] text-[28px] leading-none text-[#222]">报表统计</span>
      </div>
      <div className="relative mx-[30px] mt-5 flex h-[1000px] overflow-hidden bg-[#efeee9]">
        <WorldMap />
        <h2 className="absolute top-[12px] left-[928px] text-[36px] leading-none font-bold whitespace-nowrap text-white">数据统计</h2>
        <div className="absolute bottom-[44px] left-[5px]">
          <BaiduMark />
        </div>
        <p className="absolute bottom-[6px] left-1 h-7 bg-white/65 px-[2px] text-[24px] leading-7 whitespace-nowrap text-black">
          © 2020 Baidu - GS(2019)5218号 - 甲测资字1100930 - 京ICP证030173号 - Data © 长地万方 &amp;{" "}
          <a className="text-[#6660c8]">OpenStreetMap</a> &amp; <a className="text-[#6660c8]">HERE</a>
        </p>
      </div>
    </section>
  );
}

export default function App() {
  return (
    <div className={`flex h-[1592px] w-[2862px] bg-white p-9 ${SANS}`}>
      <div className="flex flex-1 rounded-[10px] shadow-[0_0_40px_rgba(0,0,0,0.45)]">
        <div className="flex flex-1 overflow-hidden rounded-[10px]">
          <Sidebar />
          <div className="flex flex-1 flex-col bg-[#eeeeee]">
            <TopBar />
            <TabBar />
            <main className="mx-8 mt-8 flex h-[1294px] flex-col rounded-t-lg bg-white px-5 pt-5">
              <FilterCard />
              <ReportCard />
            </main>
          </div>
        </div>
      </div>
    </div>
  );
}
